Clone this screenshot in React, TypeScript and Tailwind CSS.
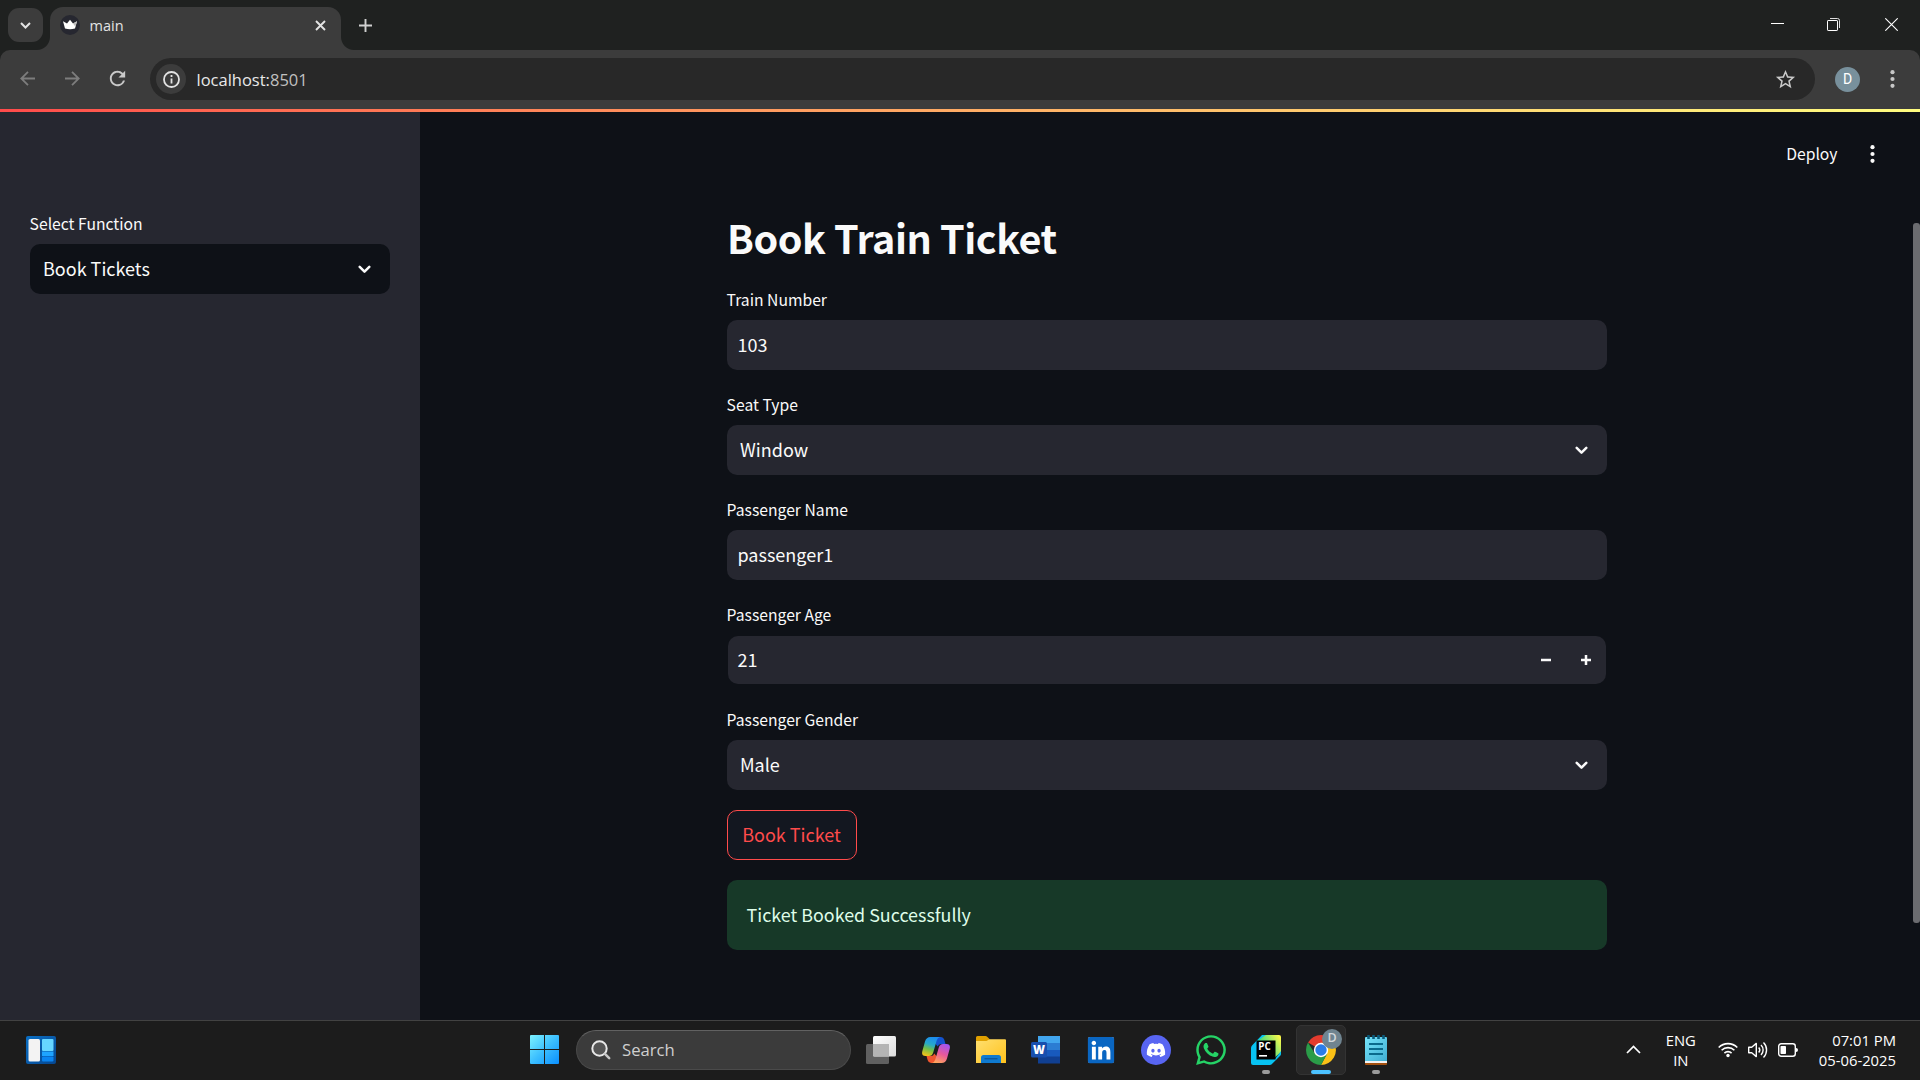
import type { ReactNode } from "react";
import { FaDiscord, FaLinkedin, FaWhatsapp } from "react-icons/fa";
import { MdOutlineStarBorder, MdRefresh } from "react-icons/md";

function ChromeTabs() {
  return (
    <div className="flex h-[50px] shrink-0 items-start bg-[#1f2120] text-[#e3e3e3]">
      <div className="mt-2 ml-2 flex h-[34px] w-[35px] items-center justify-center rounded-[11px] bg-[#3c3c3c]">
        <svg width="11" height="7" viewBox="0 0 11 7" fill="none" stroke="currentColor" strokeWidth="2">
          <path d="M1 1l4.5 4.5L10 1" />
        </svg>
      </div>
      <div className="relative mt-[7px] ml-[7px] flex h-[43px] w-[291px] items-center rounded-t-[13px] bg-[#3c3c3c] pb-[7px] pl-[10px]">
        <svg className="absolute bottom-0 -left-[13px]" width="13" height="13" viewBox="0 0 13 13">
          <path d="M13 0v13H0C7 13 13 7 13 0z" fill="#3c3c3c" />
        </svg>
        <svg className="absolute -right-[13px] bottom-0" width="13" height="13" viewBox="0 0 13 13">
          <path d="M0 0v13h13C6 13 0 7 0 0z" fill="#3c3c3c" />
        </svg>
        <svg width="20" height="20" viewBox="0 0 20 20">
          <circle cx="10" cy="10" r="10" fill="#262730" />
          <path d="M3 6.2l4 2.2 3-3.7 3 3.7 4-2.2-2 7.3q-5 1.3-10 0z" fill="#fff" />
          <path d="M13 8.4l4-2.2-1.6 5.6z" fill="#bdbdbd" />
        </svg>
        <span className='mt-px ml-[9.5px] pt-px font-["Open_Sans",sans-serif] text-[14.5px] leading-5'>main</span>
        <svg className="mr-[15.5px] ml-auto" width="11" height="11" viewBox="0 0 11 11" stroke="currentColor" strokeWidth="1.9">
          <path d="M1 1l9 9M10 1l-9 9" />
        </svg>
      </div>
      <svg className="mt-[18.5px] ml-[18px]" width="13" height="13" viewBox="0 0 13 13" stroke="#d0d0d0" strokeWidth="1.9">
        <path d="M6.5 0v13M0 6.5h13" />
      </svg>
      <div className="mt-[18px] mr-[22px] ml-auto flex h-[13px] items-center gap-[43px] text-white">
        <svg width="13" height="13" viewBox="0 0 13 13" stroke="currentColor">
          <path d="M0 5.5h13" />
        </svg>
        <svg width="13" height="13" viewBox="0 0 13 13" fill="none">
          <rect x="1" y="2" width="10" height="10" fill="#1f2120" />
          <path d="M3 .5h7.5a2 2 0 0 1 2 2V10" stroke="#ddd" />
          <rect x=".5" y="2.5" width="10" height="10" rx=".6" stroke="#fff" />
        </svg>
        <svg className="ml-[2px]" width="13" height="13" viewBox="0 0 13 13" stroke="currentColor" strokeWidth="1.1">
          <path d="M.3.3l12.4 12.4M12.7.3L.3 12.7" />
        </svg>
      </div>
    </div>
  );
}

function Dots({ className }: { className: string }) {
  return (
    <svg className={className} width="5" height="18" viewBox="0 0 5 18" fill="currentColor">
      <circle cx="2.5" cy="2.2" r="2.1" />
      <circle cx="2.5" cy="9" r="2.1" />
      <circle cx="2.5" cy="15.8" r="2.1" />
    </svg>
  );
}

function Toolbar() {
  return (
    <div className="h-[59px] shrink-0 bg-[#1f2120]">
      <div className="flex h-full items-center rounded-t-[10px] bg-[#3c3c3c] pb-px">
        <svg className="-mt-px ml-5" width="15" height="15" viewBox="0 0 15 15" fill="none" stroke="#7d7d7d" strokeWidth="1.8">
          <path d="M15 7.5H1.5M8 .8L1.3 7.5 8 14.2" />
        </svg>
        <svg className="-mt-px ml-[30px]" width="15" height="15" viewBox="0 0 15 15" fill="none" stroke="#7d7d7d" strokeWidth="1.8">
          <path d="M0 7.5h13.5M7 .8l6.7 6.7L7 14.2" />
        </svg>
        <MdRefresh className="-mt-px ml-[26px] h-[23px] w-[23px] text-[#c9c9c9]" />
        <div className="ml-[21px] flex h-[42px] w-[1665px] items-center rounded-full bg-[#282828] pl-[6px]">
          <div className="flex h-[30px] w-[30px] items-center justify-center rounded-full bg-[#3c3c3c]">
            <svg width="17" height="17" viewBox="0 0 17 17" fill="none" stroke="#e3e3e3" strokeWidth="1.8">
              <circle cx="8.5" cy="8.5" r="7.5" />
              <path d="M8.5 7.5v5M8.5 4v2" />
            </svg>
          </div>
          <span className='ml-[10.5px] pt-px font-["Open_Sans",sans-serif] text-[16.5px] leading-6 text-[#e8e8e8]'>
            localhost:<span className="text-[#c0c0c0]">8501</span>
          </span>
          <MdOutlineStarBorder className="mr-[18.5px] ml-auto h-[23px] w-[23px] text-[#c9c9c9]" />
        </div>
        <div className='ml-5 flex h-[25px] w-[25px] items-center justify-center rounded-full bg-[#78909c] font-["Roboto",sans-serif] text-[14px] text-white'>D</div>
        <Dots className="-mt-px ml-[30px] text-[#c7c7c7]" />
      </div>
    </div>
  );
}

function ChevronDown() {
  return (
    <svg width="13" height="9" viewBox="0 0 13 9" fill="none" stroke="#fafafa" strokeWidth="2.5" strokeLinecap="round" strokeLinejoin="round">
      <path d="M1.7 1.8l4.8 4.8 4.8-4.8" />
    </svg>
  );
}

function Field({ label, children }: { label: string; children: ReactNode }) {
  return (
    <div className="flex flex-col">
      <span className="mb-[5px] -ml-[0.4px] block h-[30px] text-[15.7px] leading-[29px]">{label}</span>
      {children}
    </div>
  );
}

function TextInput({ value }: { value: string }) {
  return <div className="flex h-[50px] items-center rounded-[10px] bg-[#262730] pb-[2px] pl-[10.5px] text-[18px] leading-6">{value}</div>;
}

function SelectInput({ value, dark }: { value: string; dark?: boolean }) {
  return (
    <div className={`flex h-[50px] items-center justify-between rounded-[10px] pr-[19.5px] pl-[13px] text-[18px] leading-6 ${dark ? "bg-[#0e1117]" : "bg-[#262730]"}`}>
      <span className="pb-[2px]">{value}</span>
      <ChevronDown />
    </div>
  );
}

function Slot({ children, marker, active }: { children: ReactNode; marker?: boolean; active?: boolean }) {
  return (
    <div className="flex w-[55px] justify-center">
      <div className={`relative flex h-[50px] w-[50px] items-center justify-center rounded-[5px] ${active ? "border border-[#333] bg-[#292929]" : ""}`}>
        {children}
        {marker && <span className="absolute bottom-px left-[21px] h-1 w-2 rounded-full bg-[#9a9a9a]" />}
        {active && <span className="absolute bottom-0 left-[14px] h-1 w-5 rounded-full bg-[#4cc2ff]" />}
      </div>
    </div>
  );
}

function Taskbar() {
  return (
    <div className='flex h-[60px] shrink-0 items-center border-t border-[#424242] bg-[#1c1c1c] pb-[2px] font-["Open_Sans",sans-serif]'>
      <svg className="ml-[26px]" width="30" height="28" viewBox="0 0 30 28">
        <defs>
          <linearGradient id="wg" x1="0" y1="0" x2="1" y2="1">
            <stop stopColor="#0a6fc4" />
            <stop offset="1" stopColor="#06468f" />
          </linearGradient>
        </defs>
        <rect width="30" height="28" rx="2" fill="url(#wg)" />
        <rect x="2.5" y="3" width="11.5" height="22.5" rx="1.5" fill="#f3f3f3" />
        <rect x="16" y="3" width="11.5" height="12" rx="1" fill="#66d6ff" />
        <rect x="16" y="15.5" width="11.5" height="4.5" fill="#1ea4ff" />
        <rect x="16" y="20.5" width="11.5" height="5" rx="1" fill="#0a84f0" />
      </svg>
      <div className="ml-[461px] flex items-center">
        <Slot>
          <svg width="29" height="29" viewBox="0 0 29 29">
            <defs>
              <linearGradient id="win" x1="0" y1="0" x2="29" y2="29" gradientUnits="userSpaceOnUse">
                <stop stopColor="#7df3ff" />
                <stop offset=".5" stopColor="#3cbfff" />
                <stop offset="1" stopColor="#0a8fff" />
              </linearGradient>
            </defs>
            <path d="M0 1a1 1 0 0 1 1-1h13v14H0zM15 0h13a1 1 0 0 1 1 1v13H15zM0 15h14v14H1a1 1 0 0 1-1-1zM15 15h14v13a1 1 0 0 1-1 1H15z" fill="url(#win)" />
          </svg>
        </Slot>
        <div className="ml-1 flex h-10 w-[275px] items-center rounded-full border border-[#4a4a4a] border-t-[#616161] bg-[#3b3b3b] pl-[14px]">
          <svg width="20" height="20" viewBox="0 0 20 20" fill="none">
            <circle cx="8.5" cy="8.5" r="7.2" fill="#555" stroke="#e8e8e8" strokeWidth="2" />
            <path d="M13.7 13.7l4.5 4.5" stroke="#c8c8c8" strokeWidth="2.5" strokeLinecap="round" />
          </svg>
          <span className="ml-[11px] pt-px text-[16.7px] leading-6 text-[#cfcfcf]">Search</span>
        </div>
        <div className="ml-[2.5px] flex">
          <Slot>
            <svg width="30" height="28" viewBox="0 0 30 28">
              <defs>
                <linearGradient id="tv" x1="0" y1="0" x2="1" y2="1">
                  <stop stopColor="#fff" />
                  <stop offset="1" stopColor="#dcdcdc" />
                </linearGradient>
              </defs>
              <rect y="8" width="23" height="20" rx="1.5" fill="#606060" />
              <rect x="7" width="23" height="20.5" rx="1.5" fill="url(#tv)" />
              <path d="M7 8h16v12.5H8.5A1.5 1.5 0 0 1 7 19z" fill="#b4b4b4" />
            </svg>
          </Slot>
          <Slot>
            <svg width="28" height="26" viewBox="0 0 28 26">
              <defs>
                <linearGradient id="cpa" x1=".6" y1="0" x2=".3" y2="1">
                  <stop stopColor="#1c8cf0" />
                  <stop offset=".4" stopColor="#27a9c9" />
                  <stop offset=".65" stopColor="#6fbf4b" />
                  <stop offset="1" stopColor="#f2c21a" />
                </linearGradient>
                <linearGradient id="cpb" x1=".7" y1="0" x2=".3" y2="1">
                  <stop stopColor="#a555f0" />
                  <stop offset=".5" stopColor="#e8589b" />
                  <stop offset="1" stopColor="#ffa45c" />
                </linearGradient>
              </defs>
              <path d="M12 0h7q2.5 0 3.3 2.8L23.5 7H19q-2.5 0-3.3 2.5L12 5z" fill="#1453cf" />
              <path d="M16 26H9q-2.5 0-3.3-2.8L4.5 19H9q2.5 0 3.3-2.500L16 21z" fill="#f0552f" />
              <path d="M8.5 0H18q-2.500.6-3.300 3.500l-3.500 12Q10.200 19 7 19H3.500Q-.8 19 .3 14.200L3 4.500Q4.300 0 8.500 0z" fill="url(#cpa)" />
              <path d="M19.500 26H10q2.500-.6 3.300-3.500l3.500-12Q17.800 7 21 7h3.500q4.300 0 3.200 4.800L25 21.500Q23.700 26 19.500 26z" fill="url(#cpb)" />
            </svg>
          </Slot>
          <Slot>
            <svg width="30" height="27" viewBox="0 0 30 27">
              <defs>
                <linearGradient id="fd" x1="0" y1="0" x2="1" y2="1">
                  <stop stopColor="#ffdf70" />
                  <stop offset="1" stopColor="#ffc21c" />
                </linearGradient>
              </defs>
              <path d="M0 1.5Q0 0 1.5 0h8q1 0 1.7.7L13.5 3v4H0z" fill="#e0a000" />
              <path d="M0 5h10.5l3-1.800H29q1 0 1 1V27H0z" fill="url(#fd)" />
              <path d="M5 27v-5.500Q5 19 7.500 19h15q2.500 0 2.500 2.500V27z" fill="#0f7ad0" />
              <path d="M8.500 22.800h13" stroke="#0a4a8a" />
            </svg>
          </Slot>
          <Slot>
            <svg className="-ml-px" width="29" height="28" viewBox="0 0 29 28">
              <rect x="7" width="22" height="7.5" fill="#41a5ee" />
              <rect x="7" y="7" width="22" height="7" fill="#2b7cd3" />
              <rect x="7" y="14" width="22" height="7" fill="#185abd" />
              <rect x="7" y="20.5" width="22" height="7" fill="#103f91" />
              <rect y="6" width="16" height="15.5" rx="1.5" fill="#174fae" />
              <text x="8" y="17.8" fill="#fff" fontSize="11.5" fontWeight="800" textAnchor="middle" fontFamily="Open Sans, sans-serif">W</text>
            </svg>
          </Slot>
          <Slot>
            <span className="flex h-[26px] w-[26px] items-center justify-center rounded-[2px] bg-white">
              <FaLinkedin className="h-[30px] w-[30px] shrink-0 text-[#0a66c2]" />
            </span>
          </Slot>
          <Slot>
            <span className="flex h-[30px] w-[30px] items-center justify-center rounded-full bg-[#5865f2]">
              <FaDiscord className="h-[20px] w-[20px] text-white" />
            </span>
          </Slot>
          <Slot>
            <FaWhatsapp className="h-[34px] w-[34px] text-[#25d366]" />
          </Slot>
          <Slot marker>
            <svg width="30" height="30" viewBox="0 0 30 30">
              <defs>
                <linearGradient id="pc" x1="10" y1="14" x2="29" y2="2" gradientUnits="userSpaceOnUse">
                  <stop stopColor="#21d789" />
                  <stop offset="1" stopColor="#fcf84a" />
                </linearGradient>
              </defs>
              <path d="M12 0h16q2 0 2 2v15L17 28.5 6 6z" fill="url(#pc)" />
              <path d="M0 13q0-1.5 1-2.500L11 0h4L6 6v18h18l6-8v3q0 1-.8 1.800l-8.500 8.400q-.7.800-1.900.800H2q-2 0-2-2z" fill="#07c3f2" />
              <rect x="5.5" y="5.5" width="19" height="19" fill="#000" />
              <text x="7.3" y="14.6" fill="#fff" fontSize="9.8" fontWeight="700" fontFamily="Open Sans, sans-serif">PC</text>
              <rect x="8" y="20" width="8" height="1.6" fill="#fff" />
            </svg>
          </Slot>
          <Slot active>
            <svg width="30" height="30" viewBox="-15 -15 30 30">
              <path d="M0 0L-12.99 -7.5A15 15 0 0 1 12.99 -7.5z" fill="#e33b2e" />
              <path d="M0-7.2H13.1A15 15 0 0 1 0 15L6.2 3.6z" fill="#fbc116" />
              <path d="M-6.2 3.6L-12.99-7.5A15 15 0 0 0 0 15L6.2 3.6z" fill="#2a9c48" />
              <circle r="7.2" fill="#fff" />
              <circle r="5.7" fill="#2b7de9" />
            </svg>
            <span className="absolute top-[3px] left-[25px] flex h-5 w-5 items-center justify-center rounded-full bg-[#6f8490] text-[12.5px] font-semibold text-[#d2d8dc]">D</span>
          </Slot>
          <Slot marker>
            <svg width="22" height="30" viewBox="0 0 22 30">
              <defs>
                <linearGradient id="np" x1="0" y1="0" x2="1" y2="1">
                  <stop stopColor="#76e4fb" />
                  <stop offset="1" stopColor="#40aed2" />
                </linearGradient>
              </defs>
              <rect y="24" width="22" height="6" rx="1" fill="#a3500f" />
              <rect y="22" width="22" height="6" fill="#f2f2f2" />
              <path d="M0 3q0-1 1-1h20q1 0 1 1v23H0z" fill="url(#np)" />
              <path d="M4 9h14M4 14h14M4 19h14" stroke="#0a6a8c" strokeWidth="1.8" />
              <path d="M3.5 0v4M8.5 0v4M13.5 0v4M18.5 0v4" stroke="#0a5a7a" strokeWidth="2.6" />
            </svg>
          </Slot>
        </div>
      </div>
      <div className="mr-[24px] ml-auto flex items-center text-white">
        <svg width="15" height="9" viewBox="0 0 15 9" fill="none" stroke="currentColor" strokeWidth="1.7">
          <path d="M1 8l6.5-6.5L14 8" />
        </svg>
        <div className="ml-[20px] w-[40px] text-center text-[14.8px] leading-[20px]">
          <div>ENG</div>
          <div>IN</div>
        </div>
        <svg className="ml-[17px]" width="20" height="16" viewBox="0 0 20 16" fill="none" stroke="currentColor" strokeWidth="1.6">
          <path d="M.7 5.5a13.2 13.2 0 0 1 18.6 0M3.6 8.3a9.1 9.1 0 0 1 12.8 0M6.4 11.1a5.1 5.1 0 0 1 7.2 0" />
          <circle cx="10" cy="13.5" r="1.7" fill="currentColor" stroke="none" />
        </svg>
        <svg className="ml-[10px]" width="20" height="18" viewBox="0 0 20 18" fill="none" stroke="currentColor" strokeWidth="1.4">
          <path d="M.7 6.2h3L8.3 2.4v13.2L3.7 11.8h-3z" strokeLinejoin="round" />
          <path d="M10.7 6.5a3.7 3.7 0 0 1 0 5M13 4a7 7 0 0 1 0 10M15.5 1.6a10.5 10.5 0 0 1 0 14.8" />
        </svg>
        <svg className="ml-[10px]" width="20" height="14" viewBox="0 0 20 14" fill="none">
          <rect x=".7" y=".7" width="16.6" height="12.6" rx="2.5" stroke="currentColor" strokeWidth="1.4" />
          <rect x="2.5" y="3" width="5.5" height="8" rx=".8" fill="currentColor" />
          <path d="M18 5q2 0 2 2t-2 2z" fill="currentColor" />
        </svg>
        <div className="ml-[21px] text-right text-[14.8px] leading-[20px]">
          <div>07:01 PM</div>
          <div>05-06-2025</div>
        </div>
      </div>
    </div>
  );
}

export default function App() {
  return (
    <div className='flex h-[1080px] w-[1920px] flex-col overflow-hidden bg-[#0e1117] font-["Noto_Sans_CJK_JP","Noto_Sans",sans-serif] text-[#fafafa]'>
      <ChromeTabs />
      <Toolbar />
      <div className="h-[3px] shrink-0 bg-linear-to-r from-[#ff4b4b] to-[#fffd80]" />
      <div className="flex min-h-0 flex-1">
        <aside className="w-[420px] shrink-0 bg-[#262730] px-[30px] pt-[97px]">
          <Field label="Select Function">
            <SelectInput value="Book Tickets" dark />
          </Field>
        </aside>
        <main className="flex min-w-0 flex-1 flex-col">
          <header className="mr-[45px] flex h-[85px] items-center justify-end text-[15.7px] leading-6">
            <span className="pb-[2px]">Deploy</span>
            <Dots className="-mt-px ml-[32.5px]" />
          </header>
          <div className="ml-[307px] flex w-[880px] flex-col gap-5">
            <h1 className="-mb-5 h-[88px] pt-[10px] text-[39.5px] leading-[60px] font-bold tracking-[-0.42px]">Book Train Ticket</h1>
            <Field label="Train Number">
              <TextInput value="103" />
            </Field>
            <Field label="Seat Type">
              <SelectInput value="Window" />
            </Field>
            <Field label="Passenger Name">
              <TextInput value="passenger1" />
            </Field>
            <Field label="Passenger Age">
              <div className="mx-px my-px flex h-12 items-center rounded-[10px] bg-[#262730] pr-[15px] pl-[9.5px] text-[18px] leading-6">
                <span className="pb-[2px]">21</span>
                <svg className="ml-auto" width="10" height="10" viewBox="0 0 10 10" stroke="#fafafa" strokeWidth="2.5">
                  <path d="M0 5h10" />
                </svg>
                <svg className="ml-[30px]" width="10" height="10" viewBox="0 0 10 10" stroke="#fafafa" strokeWidth="2.5">
                  <path d="M0 5h10M5 0v10" />
                </svg>
              </div>
            </Field>
            <Field label="Passenger Gender">
              <SelectInput value="Male" />
            </Field>
            <div className="flex h-[50px] w-[130px] items-center justify-center rounded-[10px] border border-[#ff4b4b] bg-[#131720] pr-px pb-[2px] text-[18px] leading-6 text-[#ff4b4b]">
              Book Ticket
            </div>
            <div className="flex h-[70px] items-center rounded-[10px] bg-[#173928] pb-[2px] pl-[19.5px] text-[17.9px] leading-6 text-[#dffde9]">Ticket Booked Successfully</div>
          </div>
        </main>
        <div className="-ml-[7px] w-[7px] shrink-0 pt-[111px]">
          <div className="h-[700px] rounded-[3px] bg-[#6b6c70]" />
        </div>
      </div>
      <Taskbar />
    </div>
  );
}
